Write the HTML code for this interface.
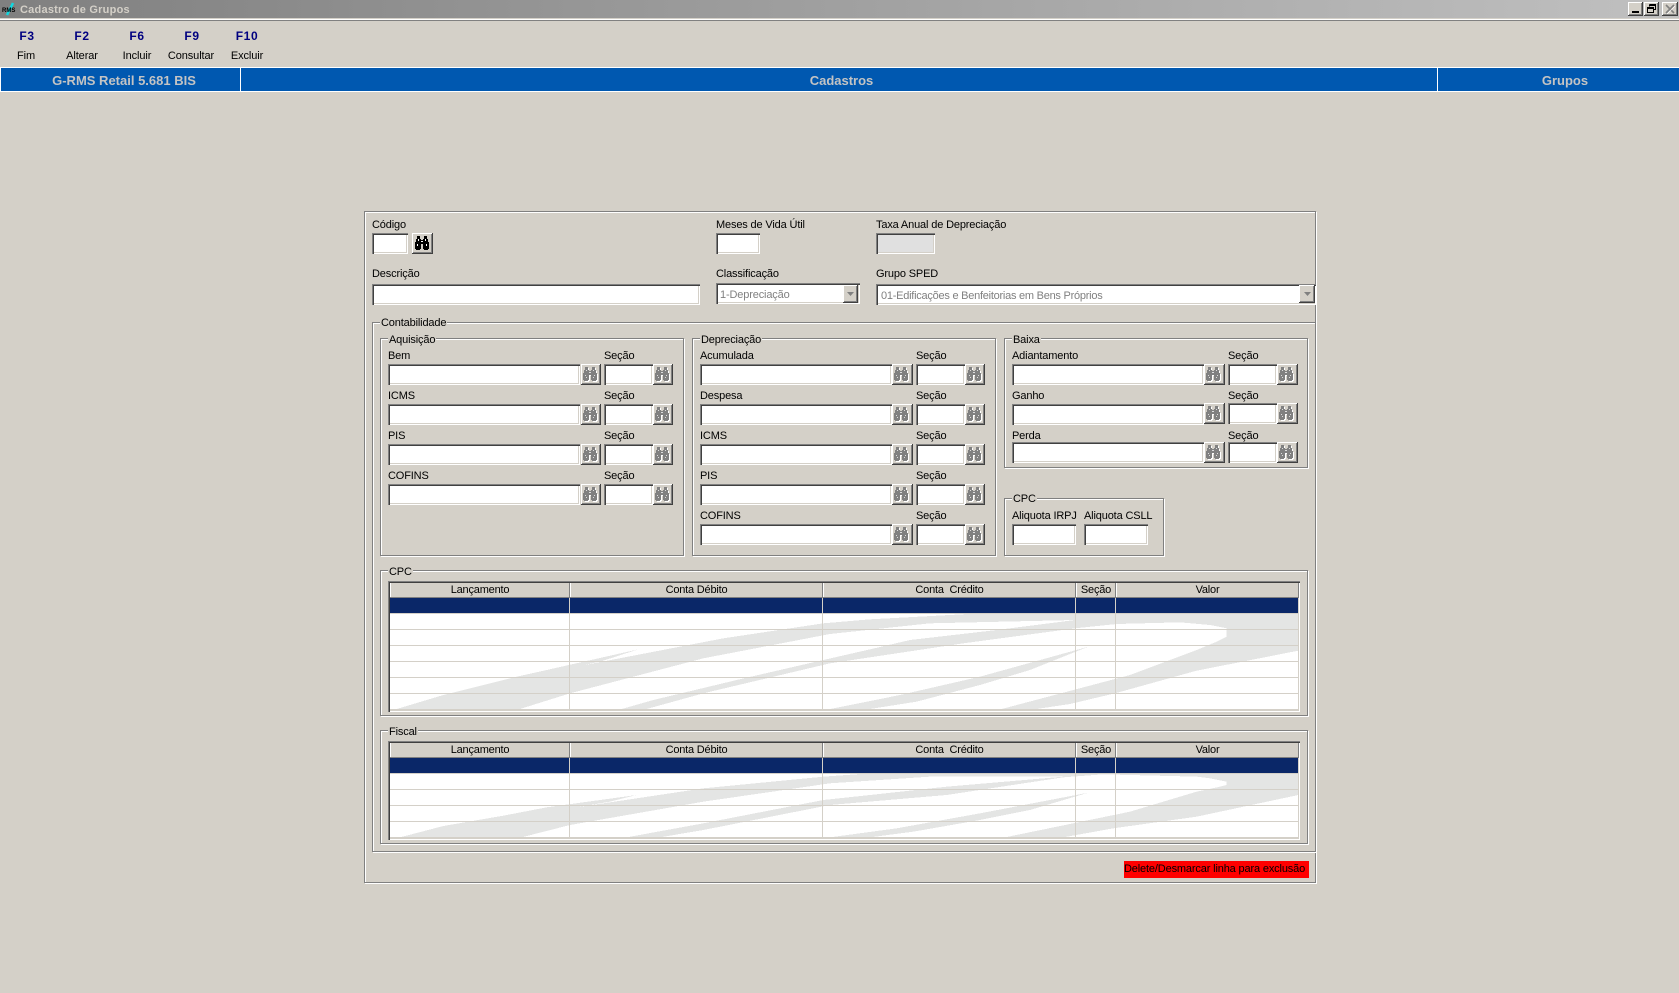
<!DOCTYPE html>
<html lang="pt">
<head>
<meta charset="utf-8">
<title>Cadastro de Grupos</title>
<style>
html,body{margin:0;padding:0;width:1679px;height:993px;overflow:hidden;background:#d4d0c8;}
body{position:relative;font-family:"Liberation Sans",sans-serif;font-size:11px;color:#000;}
div,span,svg{position:absolute;display:block;box-sizing:border-box;}
.l{line-height:14px;height:14px;white-space:nowrap;letter-spacing:-.15px;margin-top:1px;}
.i{background:#fff;height:21px;box-shadow:inset 1px 1px 0 #808080,inset 2px 2px 0 #404040,inset -1px -1px 0 #fff,inset -2px -2px 0 #d4d0c8;}
.b{background:#d4d0c8;height:21px;width:21px;box-shadow:inset -1px -1px 0 #404040,inset 1px 1px 0 #fff,inset -2px -2px 0 #808080;}
.b svg{left:2px;top:3px;width:15px;height:15px;}
.g{border:1px solid #808080;box-shadow:1px 1px 0 #fff,inset 1px 1px 0 #fff;}
.lg{background:#d4d0c8;padding:0 1px;line-height:14px;height:14px;white-space:nowrap;letter-spacing:-.15px;margin-top:1px;}
.a1{left:388px;width:192px}.a2{left:581px;width:20px}.a3{left:604px;width:49px}.a4{left:653px;width:20px}
.d1{left:700px;width:192px}.d2{left:892px;width:21px}.d3{left:916px;width:49px}.d4{left:965px;width:20px}
.x1{left:1012px;width:192px}.x2{left:1204px;width:21px}.x3{left:1228px;width:49px}.x4{left:1277px;width:21px}
.t{left:388px;width:912px;background:#fff;box-shadow:inset 1px 1px 0 #808080,inset 2px 2px 0 #404040,inset -1px -1px 0 #fff,inset -2px -2px 0 #d4d0c8;}
.hd{top:2px;height:15px;background:#d4d0c8;border-bottom:1px solid #808080;text-align:center;line-height:15px;letter-spacing:-.2px;white-space:pre;}
.hb{box-shadow:inset -1px 0 0 #808080,inset 1px 0 0 #fff;}
.c1{left:2px;width:180px}.c2{left:182px;width:253px}.c3{left:435px;width:253px}.c4{left:688px;width:40px}.c5{left:728px;width:183px}
.sel{left:2px;top:17px;width:908px;height:15px;background:#0a2768;}
.hl{left:2px;width:908px;height:1px;background:#d4d0c8;}
.vl{width:1px;background:#d4d0c8;}
.tb{color:#000080;font-weight:bold;font-size:12px;line-height:14px;text-align:center;width:50px;top:29px;letter-spacing:.6px;}
.tl{line-height:14px;text-align:center;width:60px;top:49px;white-space:nowrap;letter-spacing:-.1px;}
.bt{color:#c4c4c4;font-weight:bold;font-size:13px;line-height:16px;top:73px;text-align:center;white-space:nowrap;}
.wb{height:14px;top:2px;background:#d4d0c8;box-shadow:inset -1px -1px 0 #404040,inset 1px 1px 0 #fff,inset -2px -2px 0 #808080;}
</style>
</head>
<body>
<svg width="0" height="0" style="left:0;top:0">
  <defs>
    <symbol id="be" viewBox="0 0 15 15">
      <path fill="#000" shape-rendering="crispEdges" d="M2 0h3v3H2z M9 0h3v3H9z M1 3h5v1H1z M8 3h5v1H8z M1 4h12v2H1z M0 6h14v2H0z M0 8h6v5H0z M8 8h6v5H8z M1 13h4v1H1z M9 13h4v1H9z"/>
      <path fill="#fff" shape-rendering="crispEdges" d="M3 3h1v2H3z M10 3h1v2h-1z M2 8h1v2H2z M11 8h1v2h-1z M6 5h2v1H6z"/>
    </symbol>
    <symbol id="bd" viewBox="0 0 15 15">
      <path fill="#fff" shape-rendering="crispEdges" transform="translate(1 1)" d="M2 0h3v3H2z M9 0h3v3H9z M1 3h5v1H1z M8 3h5v1H8z M1 4h12v2H1z M0 6h14v2H0z M0 8h6v5H0z M8 8h6v5H8z M1 13h4v1H1z M9 13h4v1H9z"/>
      <path fill="#808080" shape-rendering="crispEdges" d="M2 0h3v3H2z M9 0h3v3H9z M1 3h5v1H1z M8 3h5v1H8z M1 4h12v2H1z M0 6h14v2H0z M0 8h6v5H0z M8 8h6v5H8z M1 13h4v1H1z M9 13h4v1H9z"/>
      <path fill="#dcdcdc" shape-rendering="crispEdges" d="M3 3h1v1H3z M10 3h1v1h-1z M2 8h1v1H2z M11 8h1v1h-1z M6 5h2v1H6z M3 10h1v1H3z M10 10h1v1h-1z"/>
    </symbol>
  </defs>
</svg>

<!-- Title bar -->
<div style="left:0;top:0;width:1679px;height:18px;background:linear-gradient(90deg,#808080,#c0c0c0)"></div>
<div style="left:0;top:18px;width:1679px;height:1px;background:#d4d0c8"></div>
<div style="left:0;top:19px;width:1679px;height:1px;background:#fff"></div>
<div style="left:0;top:20px;width:1679px;height:1px;background:#808080"></div>
<svg style="left:1px;top:1px" width="18" height="15" viewBox="0 0 18 15"><path d="M6 14 L12 2" stroke="#10d8e0" stroke-width="2.5" fill="none"/><text x="1" y="11" font-family="Liberation Sans" font-size="6" font-weight="bold" fill="#000">RMS</text></svg>
<div style="left:20px;top:2px;line-height:16px;font-weight:bold;font-size:11px;color:#d4d0c8;letter-spacing:.23px;white-space:nowrap">Cadastro de Grupos</div>
<div class="wb" style="left:1628px;width:15px"><div style="left:4px;top:9px;width:7px;height:2px;background:#000"></div></div>
<div class="wb" style="left:1644px;width:15px"><svg style="left:2px;top:1px" width="11" height="11" viewBox="0 0 11 11"><path fill="none" stroke="#000" shape-rendering="crispEdges" d="M3.5 1.5h6v5h-2 M3.5 2.5h6 M3.5 1.5v2 M1.5 4.5h6v5h-6z M1.5 5.5h6"/></svg></div>
<div class="wb" style="left:1662px;width:16px"><svg style="left:3px;top:2px" width="10" height="10" viewBox="0 0 10 10"><path d="M1 1L9 9M9 1L1 9" stroke="#808080" stroke-width="1.6" fill="none"/><path d="M2 10L10 2" stroke="#fff" stroke-width=".7" fill="none"/></svg></div>

<!-- Toolbar -->
<div class="tb" style="left:2px">F3</div><div class="tb" style="left:57px">F2</div><div class="tb" style="left:112px">F6</div><div class="tb" style="left:167px">F9</div><div class="tb" style="left:222px">F10</div>
<div class="tl" style="left:-4px">Fim</div><div class="tl" style="left:52px">Alterar</div><div class="tl" style="left:107px">Incluir</div><div class="tl" style="left:161px">Consultar</div><div class="tl" style="left:217px">Excluir</div>

<!-- Blue bar -->
<div style="left:0;top:67px;width:1679px;height:25px;background:#0058b0;border-top:1px solid #fff;border-bottom:1px solid #fff"></div>
<div style="left:0;top:67px;width:1px;height:25px;background:#fff"></div>
<div style="left:240px;top:68px;width:1px;height:23px;background:#fff"></div>
<div style="left:1437px;top:68px;width:1px;height:23px;background:#fff"></div>
<div class="bt" style="left:0;width:248px">G-RMS Retail 5.681 BIS</div>
<div class="bt" style="left:741px;width:201px">Cadastros</div>
<div class="bt" style="left:1465px;width:200px">Grupos</div>

<!-- Main panel -->
<div class="g" style="left:364px;top:211px;width:952px;height:672px"></div>

<div class="l" style="left:372px;top:217px">Código</div>
<div class="i" style="left:372px;top:233px;width:36px"></div>
<div class="b" style="left:412px;top:233px"><svg style="left:3px"><use href="#be"/></svg></div>
<div class="l" style="left:716px;top:217px">Meses de Vida Útil</div>
<div class="i" style="left:716px;top:233px;width:44px"></div>
<div class="l" style="left:876px;top:217px">Taxa Anual de Depreciação</div>
<div class="i" style="left:876px;top:233px;width:59px;background:#e0e0e0"></div>

<div class="l" style="left:372px;top:266px">Descrição</div>
<div class="i" style="left:372px;top:284px;width:328px"></div>
<div class="l" style="left:716px;top:266px">Classificação</div>
<div class="i" style="left:716px;top:283px;width:144px"></div>
<div class="l" style="left:720px;top:287px;color:#808080">1-Depreciação</div>
<div class="b" style="left:843px;top:285px;width:15px;height:18px"><svg style="left:3px;top:6px;width:9px;height:6px" viewBox="0 0 9 6"><path d="M1 1h7L4.5 5z" fill="#808080"/></svg></div>
<div class="l" style="left:876px;top:266px">Grupo SPED</div>
<div class="i" style="left:876px;top:284px;width:440px"></div>
<div class="l" style="left:881px;top:288px;color:#808080;letter-spacing:-.25px">01-Edificações e Benfeitorias em Bens Próprios</div>
<div class="b" style="left:1299px;top:285px;width:16px;height:18px"><svg style="left:4px;top:6px;width:9px;height:6px" viewBox="0 0 9 6"><path d="M1 1h7L4.5 5z" fill="#808080"/></svg></div>

<!-- Contabilidade -->
<div class="g" style="left:372px;top:322px;width:944px;height:530px"></div>
<div class="lg" style="left:380px;top:315px">Contabilidade</div>

<!-- Aquisição -->
<div class="g" style="left:380px;top:338px;width:304px;height:218px"></div>
<div class="lg" style="left:388px;top:332px">Aquisição</div>
<div class="l" style="left:388px;top:348px">Bem</div><div class="l" style="left:604px;top:348px">Seção</div>
<div class="i a1" style="top:364px"></div><div class="b a2" style="top:364px"><svg><use href="#bd"/></svg></div><div class="i a3" style="top:364px"></div><div class="b a4" style="top:364px"><svg><use href="#bd"/></svg></div>
<div class="l" style="left:388px;top:388px">ICMS</div><div class="l" style="left:604px;top:388px">Seção</div>
<div class="i a1" style="top:404px"></div><div class="b a2" style="top:404px"><svg><use href="#bd"/></svg></div><div class="i a3" style="top:404px"></div><div class="b a4" style="top:404px"><svg><use href="#bd"/></svg></div>
<div class="l" style="left:388px;top:428px">PIS</div><div class="l" style="left:604px;top:428px">Seção</div>
<div class="i a1" style="top:444px"></div><div class="b a2" style="top:444px"><svg><use href="#bd"/></svg></div><div class="i a3" style="top:444px"></div><div class="b a4" style="top:444px"><svg><use href="#bd"/></svg></div>
<div class="l" style="left:388px;top:468px">COFINS</div><div class="l" style="left:604px;top:468px">Seção</div>
<div class="i a1" style="top:484px"></div><div class="b a2" style="top:484px"><svg><use href="#bd"/></svg></div><div class="i a3" style="top:484px"></div><div class="b a4" style="top:484px"><svg><use href="#bd"/></svg></div>

<!-- Depreciação -->
<div class="g" style="left:692px;top:338px;width:304px;height:218px"></div>
<div class="lg" style="left:700px;top:332px">Depreciação</div>
<div class="l" style="left:700px;top:348px">Acumulada</div><div class="l" style="left:916px;top:348px">Seção</div>
<div class="i d1" style="top:364px"></div><div class="b d2" style="top:364px"><svg><use href="#bd"/></svg></div><div class="i d3" style="top:364px"></div><div class="b d4" style="top:364px"><svg><use href="#bd"/></svg></div>
<div class="l" style="left:700px;top:388px">Despesa</div><div class="l" style="left:916px;top:388px">Seção</div>
<div class="i d1" style="top:404px"></div><div class="b d2" style="top:404px"><svg><use href="#bd"/></svg></div><div class="i d3" style="top:404px"></div><div class="b d4" style="top:404px"><svg><use href="#bd"/></svg></div>
<div class="l" style="left:700px;top:428px">ICMS</div><div class="l" style="left:916px;top:428px">Seção</div>
<div class="i d1" style="top:444px"></div><div class="b d2" style="top:444px"><svg><use href="#bd"/></svg></div><div class="i d3" style="top:444px"></div><div class="b d4" style="top:444px"><svg><use href="#bd"/></svg></div>
<div class="l" style="left:700px;top:468px">PIS</div><div class="l" style="left:916px;top:468px">Seção</div>
<div class="i d1" style="top:484px"></div><div class="b d2" style="top:484px"><svg><use href="#bd"/></svg></div><div class="i d3" style="top:484px"></div><div class="b d4" style="top:484px"><svg><use href="#bd"/></svg></div>
<div class="l" style="left:700px;top:508px">COFINS</div><div class="l" style="left:916px;top:508px">Seção</div>
<div class="i d1" style="top:524px"></div><div class="b d2" style="top:524px"><svg><use href="#bd"/></svg></div><div class="i d3" style="top:524px"></div><div class="b d4" style="top:524px"><svg><use href="#bd"/></svg></div>

<!-- Baixa -->
<div class="g" style="left:1004px;top:338px;width:304px;height:130px"></div>
<div class="lg" style="left:1012px;top:332px">Baixa</div>
<div class="l" style="left:1012px;top:348px">Adiantamento</div><div class="l" style="left:1228px;top:348px">Seção</div>
<div class="i x1" style="top:364px"></div><div class="b x2" style="top:364px"><svg><use href="#bd"/></svg></div><div class="i x3" style="top:364px"></div><div class="b x4" style="top:364px"><svg><use href="#bd"/></svg></div>
<div class="l" style="left:1012px;top:388px">Ganho</div><div class="l" style="left:1228px;top:388px">Seção</div>
<div class="i x1" style="top:404px"></div><div class="b x2" style="top:403px"><svg><use href="#bd"/></svg></div><div class="i x3" style="top:403px"></div><div class="b x4" style="top:403px"><svg><use href="#bd"/></svg></div>
<div class="l" style="left:1012px;top:428px">Perda</div><div class="l" style="left:1228px;top:428px">Seção</div>
<div class="i x1" style="top:442px"></div><div class="b x2" style="top:442px"><svg><use href="#bd"/></svg></div><div class="i x3" style="top:442px"></div><div class="b x4" style="top:442px"><svg><use href="#bd"/></svg></div>

<!-- CPC small -->
<div class="g" style="left:1004px;top:498px;width:160px;height:58px"></div>
<div class="lg" style="left:1012px;top:491px">CPC</div>
<div class="l" style="left:1012px;top:508px">Aliquota IRPJ</div>
<div class="l" style="left:1084px;top:508px">Aliquota CSLL</div>
<div class="i" style="left:1012px;top:524px;width:64px"></div>
<div class="i" style="left:1084px;top:524px;width:64px"></div>

<!-- CPC grid -->
<div class="g" style="left:380px;top:570px;width:928px;height:146px"></div>
<div class="lg" style="left:388px;top:564px">CPC</div>
<div class="t" style="top:581px;height:131px">
  <svg style="left:2px;top:17px" width="908" height="111" viewBox="60 114 2724 333" shape-rendering="crispEdges">
    <path fill="#e4e5e4" d="M80 447L220 405L440 350L530 330L805 268L700 302L640 316L800 285L1060 235L1360 190L1500 178L1795 162L2785 130L2785 272L2480 332L2235 400L2100 432L2000 447L1895 447L2280 345L2480 270L2540 245L2570 230L2570 205L2520 195L2430 187L2240 192L2115 205L1780 250L1380 310L1000 400L830 447L755 447L850 420L1100 360L1360 300L1500 268L1620 240L1880 210L2115 180L1680 190L1380 222L1000 295L600 400L450 447Z"/>
    <path fill="#e4e5e4" d="M1380 447L1590 405L1830 350L2155 260L1980 330L1830 375L1640 425L1500 447Z"/>
  </svg>
  <div class="sel"></div>
  <div class="hl" style="top:32px"></div><div class="hl" style="top:48px"></div><div class="hl" style="top:64px"></div><div class="hl" style="top:80px"></div><div class="hl" style="top:96px"></div><div class="hl" style="top:112px"></div><div class="hl" style="top:128px"></div>
  <div class="vl" style="left:181px;top:17px;height:111px"></div><div class="vl" style="left:434px;top:17px;height:111px"></div><div class="vl" style="left:687px;top:17px;height:111px"></div><div class="vl" style="left:727px;top:17px;height:111px"></div>
  <div class="hd hb c1">Lançamento</div><div class="hd hb c2">Conta Débito</div><div class="hd hb c3">Conta  Crédito</div><div class="hd hb c4">Seção</div><div class="hd hb c5">Valor</div>
</div>

<!-- Fiscal grid -->
<div class="g" style="left:380px;top:730px;width:928px;height:114px"></div>
<div class="lg" style="left:388px;top:724px">Fiscal</div>
<div class="t" style="top:741px;height:99px">
  <svg style="left:2px;top:17px" width="908" height="79" viewBox="60 114 2724 237" shape-rendering="crispEdges">
    <path fill="#e4e5e4" d="M90 352L220 318L400 287L530 262L800 225L720 245L620 262L1000 205L1360 170L1500 160L2785 120L2785 225L2480 290L2230 325L2080 352L1905 352L2280 275L2480 215L2550 200L2570 195L2570 185L2520 175L2480 170L2200 163L2080 172L1730 225L1380 255L1000 330L870 352L770 352L1000 310L1360 240L1500 225L1730 200L2080 170L1680 170L1380 190L1000 245L600 315L455 352Z"/>
    <path fill="#e4e5e4" d="M1380 352L1580 325L1830 280L2155 218L1980 270L1830 300L1630 335L1500 352Z"/>
  </svg>
  <div class="sel"></div>
  <div class="hl" style="top:32px"></div><div class="hl" style="top:48px"></div><div class="hl" style="top:64px"></div><div class="hl" style="top:80px"></div><div class="hl" style="top:96px"></div>
  <div class="vl" style="left:181px;top:17px;height:79px"></div><div class="vl" style="left:434px;top:17px;height:79px"></div><div class="vl" style="left:687px;top:17px;height:79px"></div><div class="vl" style="left:727px;top:17px;height:79px"></div>
  <div class="hd hb c1">Lançamento</div><div class="hd hb c2">Conta Débito</div><div class="hd hb c3">Conta  Crédito</div><div class="hd hb c4">Seção</div><div class="hd hb c5">Valor</div>
</div>

<!-- Red label -->
<div style="left:1124px;top:861px;width:185px;height:17px;background:#f00"></div>
<div class="l" style="left:1124px;top:861px;white-space:nowrap">Delete/Desmarcar linha para exclusão</div>
</body>
</html>
